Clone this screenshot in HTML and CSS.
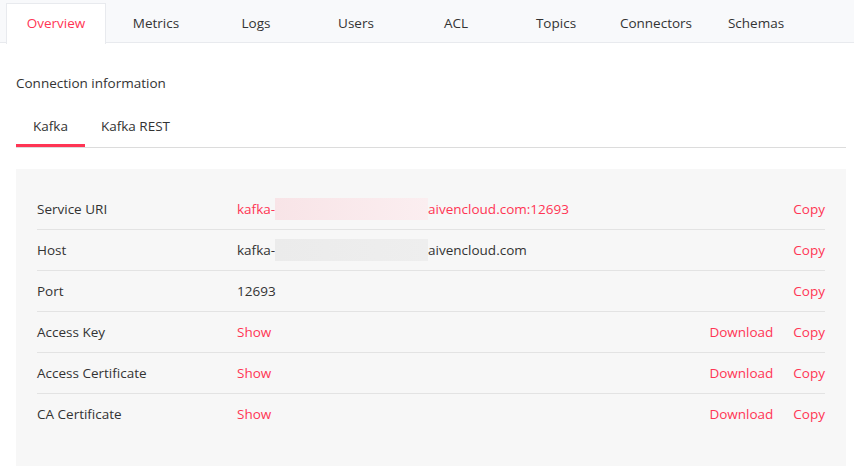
FILE: index.html
```html
<!DOCTYPE html>
<html>
<head>
<meta charset="utf-8">
<link rel="stylesheet" href="styles.css">
</head>
<body>
<nav class="tabs">
  <div class="tab active">Overview</div>
  <div class="tab">Metrics</div>
  <div class="tab">Logs</div>
  <div class="tab">Users</div>
  <div class="tab">ACL</div>
  <div class="tab">Topics</div>
  <div class="tab">Connectors</div>
  <div class="tab">Schemas</div>
</nav>
<main class="content">
  <h2 class="heading">Connection information</h2>
  <div class="subtabs">
    <div class="subtab active">Kafka</div>
    <div class="subtab">Kafka REST</div>
  </div>
  <section class="panel">
    <div class="row">
      <div class="label">Service URI</div>
      <div class="value link">kafka-<span class="redact pink"></span>aivencloud.com:12693</div>
      <div class="actions"><span class="link">Copy</span></div>
    </div>
    <div class="row">
      <div class="label">Host</div>
      <div class="value">kafka-<span class="redact grey"></span>aivencloud.com</div>
      <div class="actions"><span class="link">Copy</span></div>
    </div>
    <div class="row">
      <div class="label">Port</div>
      <div class="value">12693</div>
      <div class="actions"><span class="link">Copy</span></div>
    </div>
    <div class="row">
      <div class="label">Access Key</div>
      <div class="value link">Show</div>
      <div class="actions"><span class="link">Download</span><span class="link">Copy</span></div>
    </div>
    <div class="row">
      <div class="label">Access Certificate</div>
      <div class="value link">Show</div>
      <div class="actions"><span class="link">Download</span><span class="link">Copy</span></div>
    </div>
    <div class="row">
      <div class="label">CA Certificate</div>
      <div class="value link">Show</div>
      <div class="actions"><span class="link">Download</span><span class="link">Copy</span></div>
    </div>
  </section>
</main>
</body>
</html>
```
FILE: styles.css
```css
* { box-sizing: border-box; }
html, body { margin: 0; padding: 0; background: #fff; }
body {
  font-family: "Open Sans", "Noto Sans", sans-serif;
  font-size: 13.5px;
  color: #333;
  overflow: hidden;
}
.tabs {
  display: flex;
  padding: 3px 0 0 6px;
  height: 43px;
  background: #f8f9fb;
  border-bottom: 1px solid #e8eaee;
}
.tab {
  width: 100px;
  height: 40px;
  line-height: 40px;
  text-align: center;
  color: #333;
}
.tab.active {
  background: #fff;
  color: #ff3554;
  border: 1px solid #e8eaee;
  border-bottom: none;
  height: 41px;
  line-height: 39px;
}
.content { padding: 0 8px 0 16px; }
.heading {
  margin: 30px 0 0;
  font-size: 13.5px;
  font-weight: normal;
  line-height: 20px;
  color: #333;
}
.subtabs {
  display: flex;
  margin-top: 13px;
  border-bottom: 1px solid #dcdcdc;
}
.subtab {
  padding: 10px 16px 8px;
  line-height: 20px;
  border-bottom: 3px solid transparent;
}
.subtab.active {
  padding: 10px 17px 8px;
  border-bottom-color: #ff3554;
}
.panel {
  margin-top: 21px;
  background: #f7f7f7;
  padding: 20px 21px 60px;
}
.row {
  display: flex;
  align-items: center;
  height: 41px;
  border-bottom: 1px solid #e3e3e3;
}
.row:last-child { border-bottom: none; height: 40px; }
.label { width: 200px; }
.value { flex: 1; display: flex; align-items: center; }
.link { color: #ff3554; }
.actions { display: flex; gap: 20px; }
.redact {
  display: inline-block;
  width: 153px;
  height: 22px;
}
.redact.pink { background: linear-gradient(90deg, #f8e4e7, #fbeef0); }
.redact.grey { background: linear-gradient(90deg, #ebebeb, #eeeeee); }
```
